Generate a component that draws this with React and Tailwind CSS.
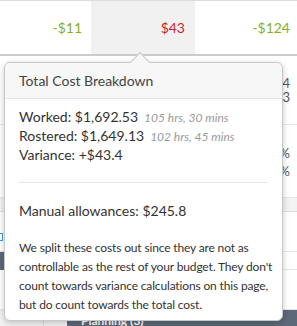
export default function App() {
  return (
    <div className="relative w-[297px] h-[326px] overflow-hidden bg-white font-['Lato',sans-serif]">
      {/* summary row */}
      <div className="flex h-[56px] border-t border-[#dedede] border-b-2 border-b-[#cccccc] text-[14px]">
        <div className="w-[91px] flex items-center justify-end pr-[9px] text-[#86b01f]">-$11</div>
        <div className="w-[104px] flex items-center justify-end pr-[10px] bg-[#f1f1f1] text-[#cc1f2b]">$43</div>
        <div className="flex-1 flex items-center justify-end pr-[7px] text-[#86b01f]">-$124</div>
      </div>

      {/* table behind the popover */}
      <div className="flex flex-col text-[13px] text-[#555]">
        <div className="h-[69px] flex flex-col items-end pr-[7px] leading-[14px] pt-[20px] border-b border-[#e6e6e6]">
          <span>$1,694</span>
          <span>$1,653</span>
        </div>
        <div className="h-[73px] flex flex-col items-end pr-[7px] leading-[18px] pt-[19px] border-b border-[#e6e6e6]">
          <span>2.6%</span>
          <span>2.4%</span>
        </div>
        <div className="h-[14px] bg-[#f3f3f3] border-b border-[#e0e0e0]" />
        <div className="h-[40px] flex items-end pb-[10px] border-b border-[#e6e6e6]">
          <span className="w-[4px] h-[8px] border border-[#3a9ad9] ml-[-1px]" />
        </div>
        <div className="h-[18px] flex">
          <div className="w-[4px] bg-[#5d6878]" />
          <div className="flex-1 border-b border-[#e6e6e6]" />
        </div>
        <div className="h-[40px] border-b border-[#e6e6e6]" />
        <div className="h-[20px] flex">
          <div className="w-[44px] bg-[#f3f3f3] border-r border-[#dddddd]" />
          <div className="w-[23px] bg-[#f3f3f3]" />
          <div className="flex-1 bg-[#5d6878] text-white text-[12px] font-bold pl-[14px] pt-[2px]">Planning (3)</div>
        </div>
      </div>

      {/* popover */}
      <div className="absolute left-[4px] top-[62px] w-[279px] h-[259px] rounded-[6px] border border-[#c8c8c8] bg-white shadow-[0_2px_6px_rgba(0,0,0,0.22)] text-[#333]">
        <div className="absolute left-[128px] top-[-8px] w-[14px] h-[14px] rotate-45 bg-[#f7f7f7] border-l border-t border-[#c8c8c8]" />
        <div className="relative h-[36px] rounded-t-[6px] bg-[#f7f7f7] border-b border-[#e6e6e6] px-[14px] flex items-center text-[14px] text-[#444]">
          Total Cost Breakdown
        </div>
        <div className="px-[14px] pt-[9px]">
          <div className="text-[14px] leading-[18px]">
            <div>
              Worked: $1,692.53
              <span className="ml-[6px] text-[12px] italic text-[#9a9a9a]">105 hrs, 30 mins</span>
            </div>
            <div>
              Rostered: $1,649.13
              <span className="ml-[6px] text-[12px] italic text-[#9a9a9a]">102 hrs, 45 mins</span>
            </div>
            <div>Variance: +$43.4</div>
          </div>
          <div className="mt-[18px] border-t border-[#e6e6e6]" />
          <div className="mt-[19px] text-[14px] leading-[18px]">Manual allowances: $245.8</div>
          <p className="mt-[18px] mr-[-14px] text-[12px] leading-[19px] tracking-[-0.15px] whitespace-nowrap">
            We split these costs out since they are not as<br />
            controllable as the rest of your budget. They don't<br />
            count towards variance calculations on this page,<br />
            but do count towards the total cost.
          </p>
        </div>
      </div>
    </div>
  )
}
